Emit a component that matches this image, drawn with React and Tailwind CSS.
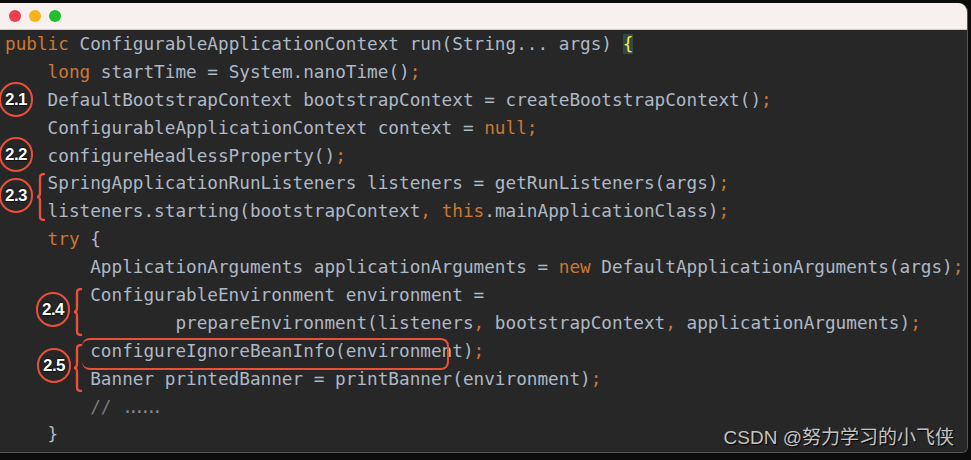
const K = 'text-[#cc7832]';

const lines = [
  [['public', K], [' ConfigurableApplicationContext run(String... args) '], ['{', 'text-[#ffe740] bg-[#2f4a44]']],
  [['    '], ['long', K], [' startTime = System.nanoTime()'], [';', K]],
  [['    DefaultBootstrapContext bootstrapContext = createBootstrapContext()'], [';', K]],
  [['    ConfigurableApplicationContext context = '], ['null', K], [';', K]],
  [['    configureHeadlessProperty()'], [';', K]],
  [['    SpringApplicationRunListeners listeners = getRunListeners(args)'], [';', K]],
  [['    listeners.starting(bootstrapContext'], [',', K], [' '], ['this', K], ['.mainApplicationClass)'], [';', K]],
  [['    '], ['try', K], [' {']],
  [['        ApplicationArguments applicationArguments = '], ['new', K], [' DefaultApplicationArguments(args)'], [';', K]],
  [['        ConfigurableEnvironment environment =']],
  [['                prepareEnvironment(listeners'], [',', K], [' bootstrapContext'], [',', K], [' applicationArguments)'], [';', K]],
  [['        configureIgnoreBeanInfo(environment)'], [';', K]],
  [['        Banner printedBanner = printBanner(environment)'], [';', K]],
  [['        '], ['// ', 'text-[#7a7a7a]'], ['……', 'text-[#8a8a8a] tracking-[-4.7px]']],
  [['    }']],
];

function Badge({ label, className }) {
  return (
    <div
      className={`absolute flex items-center justify-center w-[34px] h-[35px] rounded-full border-[2.5px] border-[#e9503a] ${className}`}
    >
      <span
        className="text-[17px] font-bold text-white tracking-[-0.5px]"
        style={{ fontFamily: '"Liberation Sans", Arial, sans-serif', WebkitTextStroke: '1px #111', paintOrder: 'stroke fill', textShadow: '0 0 2px #000' }}
      >
        {label}
      </span>
    </div>
  );
}

function Brace({ className, height }) {
  const m = height / 2;
  return (
    <svg
      className={`absolute ${className}`}
      width="10"
      height={height}
      viewBox={`0 0 10 ${height}`}
      fill="none"
      stroke="#e9503a"
      strokeWidth="2.4"
      strokeLinecap="round"
    >
      <path
        d={`M8 1 C4 1 4 3 4 6 L4 ${m - 4} C4 ${m - 1} 3 ${m} 1 ${m} C3 ${m} 4 ${m + 1} 4 ${m + 4} L4 ${height - 6} C4 ${height - 3} 4 ${height - 1} 8 ${height - 1}`}
      />
    </svg>
  );
}

export default function App() {
  return (
    <div className="w-[971px] h-[460px] bg-[#0c0c0c] pt-[3px] overflow-hidden">
      <div className="w-[968px] h-[450px] rounded-tr-[9px] rounded-br-[6px] overflow-hidden border-b border-r border-[#555] flex flex-col">
        <div className="h-[27px] bg-[#f8efef] border-b border-[#cfc8c8] flex items-center gap-[8px] pl-[9px]">
          <span className="w-[12px] h-[12px] rounded-full bg-[#e8404e]" />
          <span className="w-[12px] h-[12px] rounded-full bg-[#f5b31a]" />
          <span className="w-[12px] h-[12px] rounded-full bg-[#1fc02c]" />
        </div>
        <div className="relative flex-1 bg-[#272727] pl-[5px] pt-[1px]">
          <div
            className="text-[17.7px] text-[#aeb9c6] whitespace-pre"
            style={{ fontFamily: '"DejaVu Sans Mono", "Liberation Mono", monospace' }}
          >
            {lines.map((parts, i) => (
              <div key={i} className="h-[27.9px] leading-[27.9px]">
                {parts.map(([t, c], j) => (
                  <span key={j} className={c}>
                    {t === '……' ? '......' : t}
                  </span>
                ))}
              </div>
            ))}
          </div>

          <Badge label="2.1" className="left-[-1px] top-[52px]" />
          <Badge label="2.2" className="left-[-1px] top-[107px]" />
          <Badge label="2.3" className="left-[-1px] top-[148px]" />
          <Brace className="left-[36px] top-[143px]" height={48} />
          <Badge label="2.4" className="left-[36px] top-[262px]" />
          <Brace className="left-[73px] top-[258px]" height={48} />
          <Badge label="2.5" className="left-[37px] top-[318px]" />
          <Brace className="left-[73px] top-[314px]" height={48} />
          <div className="absolute left-[82px] top-[308px] w-[367px] h-[32px] rounded-[8px] border-2 border-[#e9503a] border-l-0" />

          <div
            className="absolute right-[13px] bottom-[1px] text-[19px] text-[#c4c4c4] leading-[26px]"
            style={{ fontFamily: '"Liberation Sans", "Noto Sans CJK SC", sans-serif', textShadow: '1px 1px 1px #000' }}
          >
            CSDN @努力学习的小飞侠
          </div>
        </div>
      </div>
    </div>
  );
}
